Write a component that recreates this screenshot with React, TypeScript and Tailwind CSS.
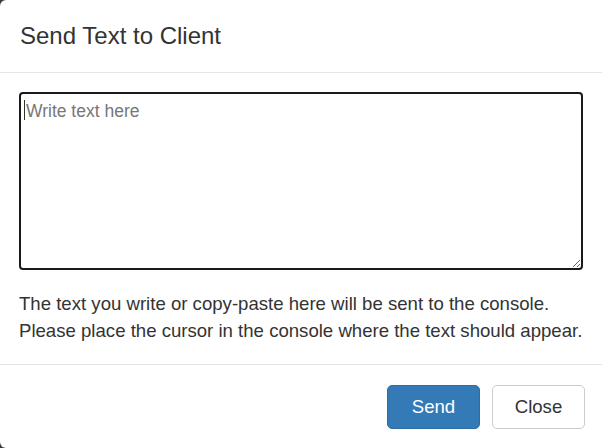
import React from 'react'

export default function App() {
  return (
    <div className="w-[602px] h-[448px] overflow-hidden bg-[#3a3a3a]" style={{ fontFamily: '"Liberation Sans", Arial, sans-serif' }}>
      <div className="w-[640px] h-[448px] bg-white rounded-[6px] flex flex-col text-[#333]">
        {/* Header */}
        <div className="h-[73px] px-5 flex items-center border-b border-[#e5e5e5]">
          <h4 className="text-[24px] leading-none font-normal">Send Text to Client</h4>
        </div>

        {/* Body */}
        <div className="w-[602px] px-[19px] pt-[19px] pb-5 border-b border-[#e5e5e5]">
          <div className="relative">
            <textarea
              className="block w-[564px] h-[178px] resize-y rounded-[4px] border-2 border-[#1a1a1a] px-[5px] py-[5px] text-[17.5px] leading-[25px] outline-none placeholder:text-[#777]"
              placeholder="Write text here"
            />
            <span className="absolute left-[5px] top-[8px] w-px h-[20px] bg-[#333]" />
          </div>
          <p className="mt-[20px] text-[18.6px] leading-[27px]">
            The text you write or copy-paste here will be sent to the console.
            <br />
            Please place the cursor in the console where the text should appear.
          </p>
        </div>

        {/* Footer */}
        <div className="w-[602px] flex justify-end gap-3 pt-5 pr-[17px]">
          <button className="w-[93px] h-[44px] rounded-[5px] bg-[#337ab7] border border-[#2e6da4] text-white text-[18.6px]">
            Send
          </button>
          <button className="w-[93px] h-[44px] rounded-[5px] bg-white border border-[#ccc] text-[#333] text-[18.6px]">
            Close
          </button>
        </div>
      </div>
    </div>
  )
}
